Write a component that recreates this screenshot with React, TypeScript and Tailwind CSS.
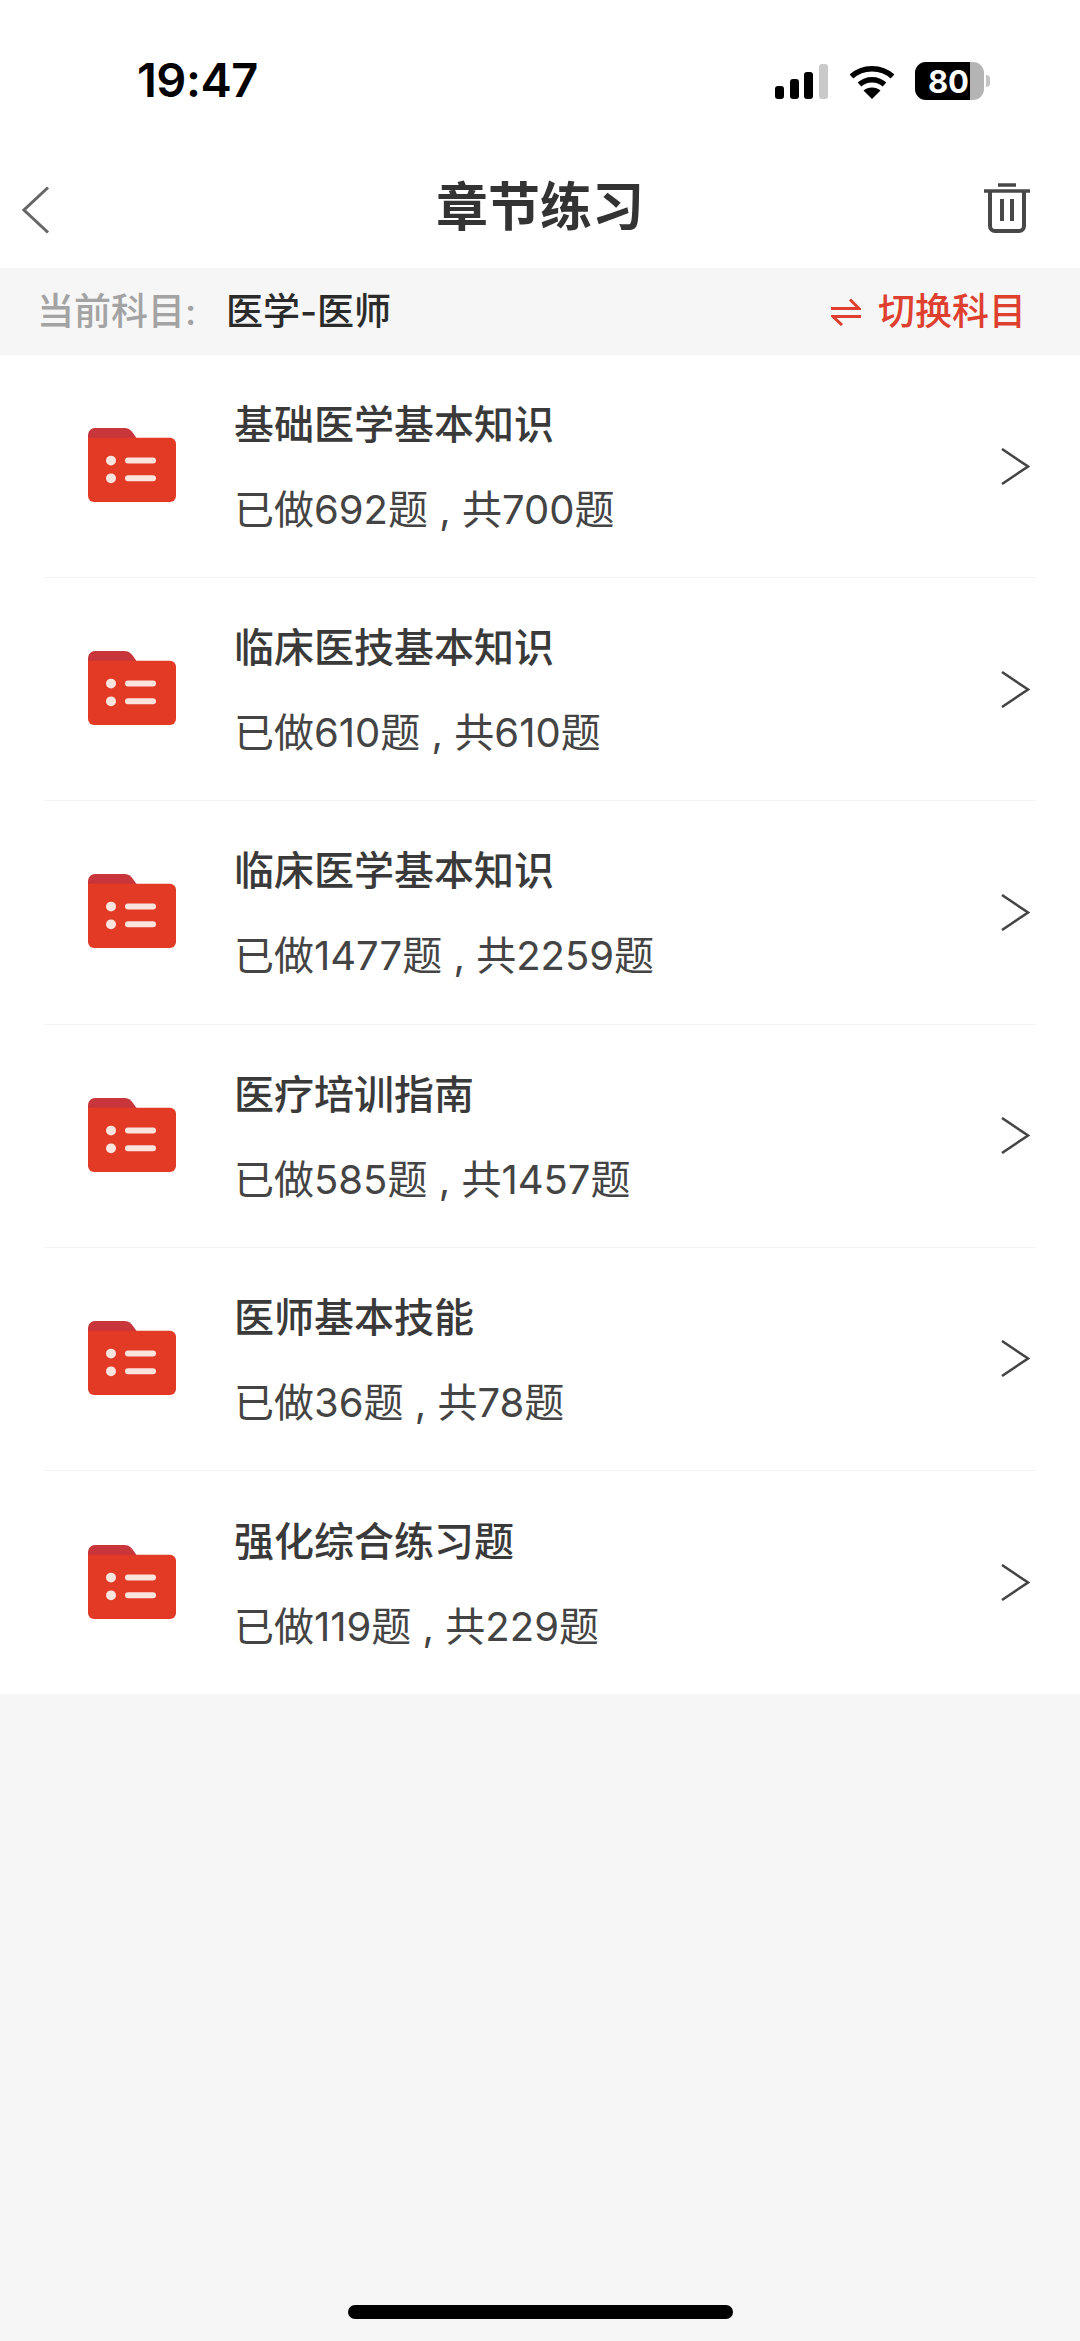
const cjk = "font-['Inter','Noto_Sans_CJK_SC',sans-serif]";

const rows = [
  { title: "基础医学基本知识", sub: "已做692题 , 共700题" },
  { title: "临床医技基本知识", sub: "已做610题 , 共610题" },
  { title: "临床医学基本知识", sub: "已做1477题 , 共2259题" },
  { title: "医疗培训指南", sub: "已做585题 , 共1457题" },
  { title: "医师基本技能", sub: "已做36题 , 共78题" },
  { title: "强化综合练习题", sub: "已做119题 , 共229题" },
];

function Folder() {
  return (
    <svg width="88" height="74" viewBox="0 0 88 75" preserveAspectRatio="none" className="shrink-0 -translate-y-[1px]">
      <path d="M0 12V7a7 7 0 0 1 7-7h29c4 0 7 2 9 5l4 6v3H0z" fill="#c8353b" />
      <path d="M0 10h82a6 6 0 0 1 6 6v53a6 6 0 0 1-6 6H6a6 6 0 0 1-6-6z" fill="#e33a26" />
      <circle cx="23" cy="33" r="5" fill="#fbe3de" />
      <circle cx="23" cy="51" r="5" fill="#fbe3de" />
      <rect x="37" y="30" width="31" height="6" rx="3" fill="#fbe3de" />
      <rect x="37" y="48" width="31" height="6" rx="3" fill="#fbe3de" />
    </svg>
  );
}

function Signal() {
  return (
    <svg width="54" height="35" viewBox="0 0 54 35">
      <rect x="0" y="22" width="9" height="13" rx="3" fill="#000" />
      <rect x="15" y="15" width="9" height="20" rx="3" fill="#000" />
      <rect x="29" y="8" width="9" height="27" rx="3" fill="#000" />
      <rect x="44" y="0" width="9" height="35" rx="3" fill="#c9c9c9" />
    </svg>
  );
}

function Wifi() {
  return (
    <svg width="46" height="35" viewBox="0 0 46 35" fill="none">
      <path d="M2.5 12.5C13.5 2 32.5 2 43.5 12.5" stroke="#000" strokeWidth="5.5" />
      <path d="M10.5 20.5C17.5 14 28.5 14 35.5 20.5" stroke="#000" strokeWidth="5.5" />
      <path d="M23 35L14.5 26.5C19 22.5 27 22.5 31.5 26.5z" fill="#000" />
    </svg>
  );
}

function Battery() {
  return (
    <div className="flex items-center gap-[2px]">
      <div className="h-[38px] w-[69px] overflow-hidden rounded-[11px] bg-[#b4b4b4]">
        <div className="flex h-full w-[55px] items-center justify-end bg-black pr-[1px]">
          <span className="font-['Inter',sans-serif] text-[31px] leading-none font-bold text-white">80</span>
        </div>
      </div>
      <div className="h-[12px] w-[4px] rounded-r-full bg-[#c4c4c4]" />
    </div>
  );
}

function Swap() {
  return (
    <svg width="30" height="28" viewBox="0 0 30 28" fill="none" stroke="#de3f2e" strokeWidth="3" className="shrink-0">
      <path d="M0 10.5H28L19 1.5" />
      <path d="M30 18.5H2L11 27" />
    </svg>
  );
}

function Row({ title, sub }: { title: string; sub: string }) {
  return (
    <div className="mx-[44px] flex h-[223.2px] items-center border-b border-[#f3f3f3] pr-[6px] pl-[44px] last:border-b-0">
      <Folder />
      <div className="ml-[58px] flex flex-1 flex-col gap-[31px] pt-[3px]">
        <div className="text-[40px] leading-[54px] font-medium text-[#3a3a3a]">{title}</div>
        <div className="text-[40px] leading-[54px] text-[#444]">{sub}</div>
      </div>
      <svg width="30" height="37" viewBox="0 0 30 37" fill="none" stroke="#444" strokeWidth="2.5" className="shrink-0">
        <path d="M2 1L28 18.5L2 36" />
      </svg>
    </div>
  );
}

export default function App() {
  return (
    <div className={`flex h-[2341px] w-[1080px] flex-col overflow-hidden bg-[#f6f6f6] ${cjk}`}>
      <div className="flex h-[152px] items-start justify-between bg-white pt-[56px] pr-[90px] pl-[137px]">
        <span className="text-[47px] leading-[48px] font-semibold tracking-[-0.5px] text-black">19:47</span>
        <div className="flex items-center gap-[20px] pt-[6px]">
          <Signal />
          <Wifi />
          <Battery />
        </div>
      </div>
      <div className="grid h-[116px] grid-cols-[1fr_auto_1fr] items-center bg-white px-[50px]">
        <svg width="28" height="48" viewBox="0 0 28 48" fill="none" stroke="#666" strokeWidth="3" className="-ml-[28px]">
          <path d="M26 1.5L2 24L26 46.5" />
        </svg>
        <span className="-translate-y-[2px] text-[52px] leading-none font-bold text-[#333]">章节练习</span>
        <svg width="46" height="50" viewBox="0 0 46 50" fill="none" stroke="#484848" strokeWidth="4" className="-translate-y-[2px] justify-self-end">
          <path d="M0 8H46" strokeWidth="3.5" />
          <path d="M14 2H32" strokeWidth="3.5" />
          <path d="M6 9V43a5 5 0 0 0 5 5H35a5 5 0 0 0 5-5V9" />
          <path d="M18 16V38M28 16V38" />
        </svg>
      </div>
      <div className="flex h-[87px] items-center justify-between pr-[54px] pl-[37px]">
        <div className="flex items-center">
          <span className="w-[189px] text-[37px] leading-none font-medium text-[#a3a3a3]">当前科目:</span>
          <span className="text-[37px] leading-none font-medium text-[#2b2b2b]">医学-医师</span>
        </div>
        <div className="flex items-center gap-[17px]">
          <Swap />
          <span className="text-[37px] leading-none font-medium text-[#de3f2e]">切换科目</span>
        </div>
      </div>
      <div className="bg-white">
        {rows.map((r) => (
          <Row key={r.title} title={r.title} sub={r.sub} />
        ))}
      </div>
      <div className="flex flex-1 items-end justify-center pb-[22px]">
        <div className="h-[14px] w-[385px] rounded-full bg-black" />
      </div>
    </div>
  );
}
